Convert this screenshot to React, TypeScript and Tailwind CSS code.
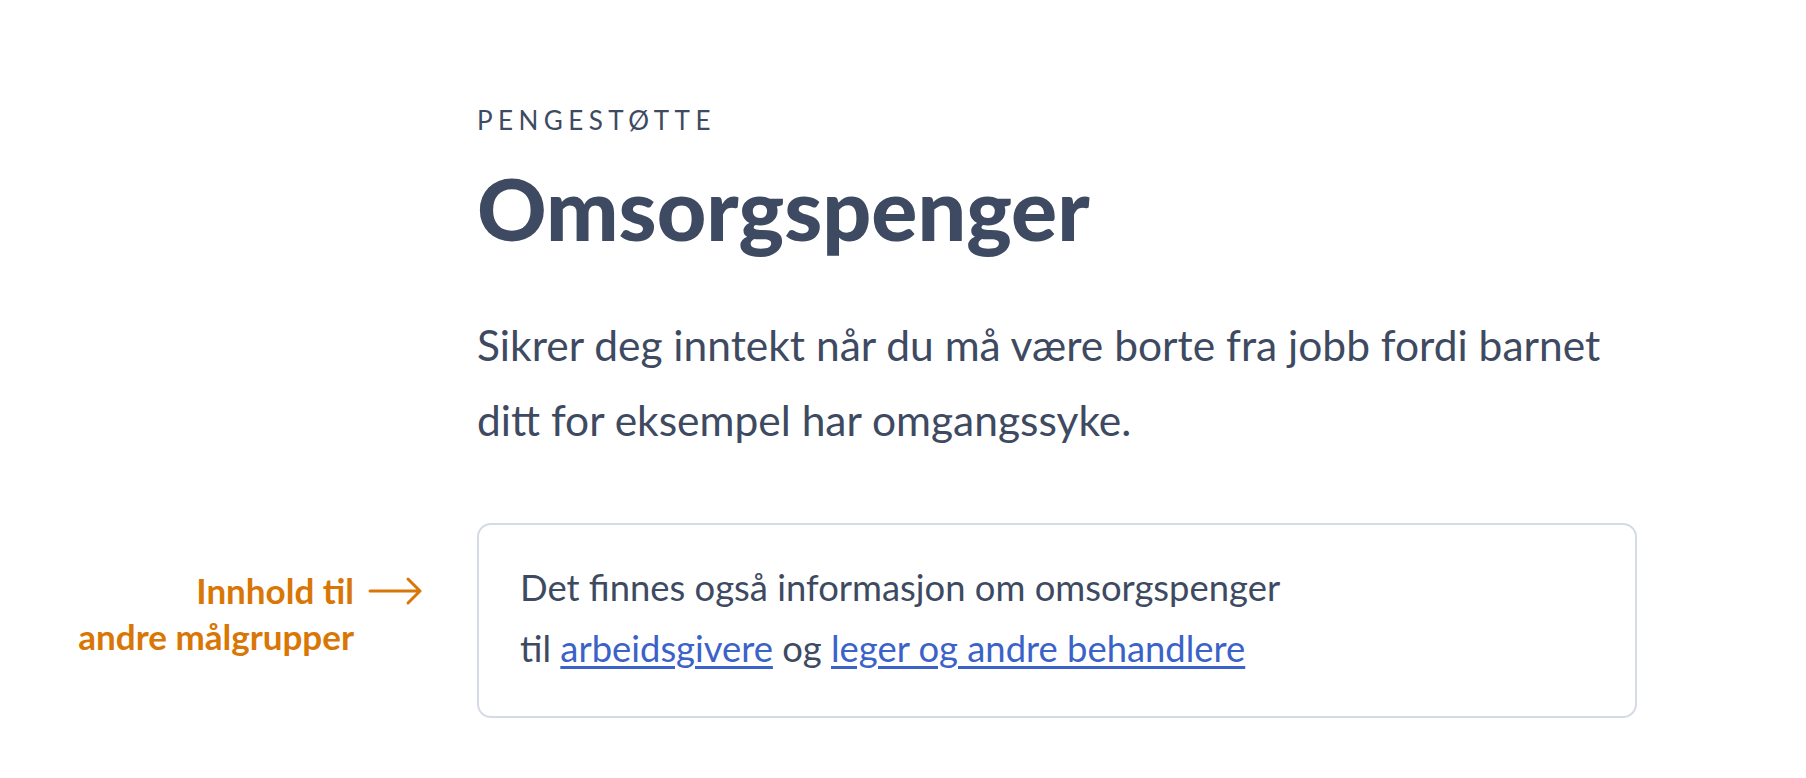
import React from 'react'

function ArrowRight() {
  return (
    <svg width="56" height="30" viewBox="0 0 56 30" fill="none" className="shrink-0">
      <path d="M2 15H52M40 3L52 15L40 27" stroke="#d97706" strokeWidth="3" strokeLinecap="round" strokeLinejoin="round" />
    </svg>
  )
}

export default function App() {
  return (
    <div className="min-h-screen w-full bg-white font-['Lato','Noto_Sans',sans-serif] text-[#3e4a61]">
      <div className="pt-[107px] pl-[477px] pr-[169px]">
        <p className="text-[26px] tracking-[0.21em] leading-none uppercase">Pengestøtte</p>
        <h1 className="mt-[32px] text-[86px] font-black leading-none">Omsorgspenger</h1>
        <p className="mt-[56px] max-w-[1160px] text-[42.5px] leading-[75px]">
          Sikrer deg inntekt når du må være borte fra jobb fordi barnet ditt for eksempel har omgangssyke.
        </p>
      </div>

      <div className="mt-[66px] flex items-center">
        <div className="w-[477px] shrink-0 flex items-start justify-end pr-[53px] pb-[16px]">
          <div className="flex items-start gap-[14px]">
            <p className="text-right text-[35px] font-bold leading-[46px] text-[#d97706]">
              Innhold til
              <br />
              andre målgrupper
            </p>
            <div className="pt-[9px]">
              <ArrowRight />
            </div>
          </div>
        </div>
        <div className="w-[1160px] rounded-[14px] border-2 border-[#d5dae6] px-[41px] pt-[32px] pb-[37px]">
          <p className="text-[36.4px] leading-[61px]">
            Det finnes også informasjon om omsorgspenger
            <br />
            til{' '}
            <a href="#" className="text-[#3b62c8] underline underline-offset-4">arbeidsgivere</a>
            {' '}og{' '}
            <a href="#" className="text-[#3b62c8] underline underline-offset-4">leger og andre behandlere</a>
          </p>
        </div>
      </div>
    </div>
  )
}
